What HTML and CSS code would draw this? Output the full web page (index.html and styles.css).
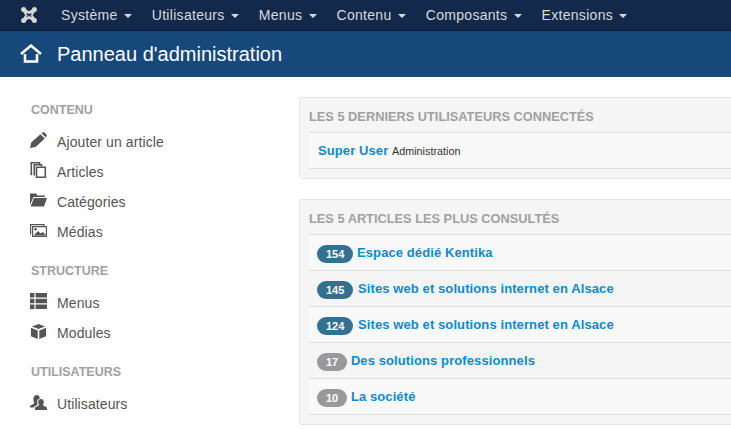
FILE: index.html
```html
<!DOCTYPE html>
<html>

<head>
    <meta charset="UTF-8">
    <title>Panneau d'administration</title>
    <link rel="stylesheet" href="styles.css">
</head>

<body>
    <nav class="navbar">
        <svg class="logo" viewBox="0 0 16 16" width="16" height="16">
            <g fill="#d6d6d2">
                <path d="M3 1 L8 4.2 L13 1 L15 3 L11.8 8 L15 13 L13 15 L8 11.8 L3 15 L1 13 L4.2 8 L1 3 Z" />
                <circle cx="2.6" cy="2.6" r="2.5" />
                <circle cx="13.4" cy="2.6" r="2.5" />
                <circle cx="2.6" cy="13.4" r="2.5" />
                <circle cx="13.4" cy="13.4" r="2.5" />
            </g>
            <path d="M5.7 6.6 L8 8 L10.3 6.6 M5.7 9.4 L8 8 L10.3 9.4" fill="none" stroke="#13294b" stroke-width="1.3" />
        </svg>
        <ul class="menu">
            <li>Système <b class="caret"></b></li>
            <li>Utilisateurs <b class="caret"></b></li>
            <li>Menus <b class="caret"></b></li>
            <li>Contenu <b class="caret"></b></li>
            <li>Composants <b class="caret"></b></li>
            <li>Extensions <b class="caret"></b></li>
        </ul>
    </nav>
    <header class="subhead">
        <svg class="home" viewBox="0 0 22 19" width="22" height="19">
            <path d="M1 10 L11 1.6 L21 10" fill="none" stroke="#fff" stroke-width="2.6" />
            <path d="M5 10 V17.5 H17 V10" fill="none" stroke="#fff" stroke-width="2.6" />
        </svg>
        <h1>Panneau d'administration</h1>
    </header>

    <div class="content">
        <aside class="sidebar">
            <h2>CONTENU</h2>
            <ul>
                <li>
                    <svg viewBox="0 0 17 16" width="17" height="16">
                        <path d="M0 16 L1.2 10.6 L10.4 2.2 L14.8 6.4 L5.6 15 Z M11.6 1.2 L12.8 0.3 Q13.6 -0.2 14.4 0.4 L16.6 2.6 Q17.2 3.4 16.6 4 L15.8 5.4 Z" fill="#555" />
                    </svg>
                    Ajouter un article
                </li>
                <li>
                    <svg viewBox="0 0 16 16" width="16" height="16">
                        <path d="M1.8 12.5 H0.8 V0.8 H9 V2.2 M3.8 13.5 V2.8 H11 V4.4" fill="none" stroke="#555" stroke-width="1.6" />
                        <path d="M6 5.2 H14.8 V15.2 H6 Z" fill="#fff" stroke="#555" stroke-width="1.6" />
                    </svg>
                    Articles
                </li>
                <li>
                    <svg viewBox="0 0 17 14" width="17" height="14">
                        <path d="M0 0.6 H6 L7.5 2.4 H15 V4 H3.4 L0 12 Z M3.9 5 H17 L14 13.5 H0.7 Z" fill="#555" />
                    </svg>
                    Catégories
                </li>
                <li>
                    <svg viewBox="0 0 17 13" width="17" height="13">
                        <path d="M0.6 10.6 V0.6 H14 V2" fill="none" stroke="#555" stroke-width="1.2" />
                        <path d="M2.6 2.6 H16.4 V12.4 H2.6 Z" fill="#fff" stroke="#555" stroke-width="1.2" />
                        <path d="M3.5 11.6 L8 7 L10.6 9.4 L12.6 8 L15.5 10.4 V11.6 Z" fill="#555" />
                        <circle cx="5.6" cy="5.2" r="1.3" fill="#555" />
                    </svg>
                    Médias
                </li>
            </ul>
            <h2>STRUCTURE</h2>
            <ul>
                <li>
                    <svg viewBox="0 0 17 16" width="17" height="16">
                        <path d="M0 0 H4.4 V4.4 H0 Z M5.6 0 H17 V4.4 H5.6 Z M0 5.8 H4.4 V10.2 H0 Z M5.6 5.8 H17 V10.2 H5.6 Z M0 11.6 H4.4 V16 H0 Z M5.6 11.6 H17 V16 H5.6 Z" fill="#555" />
                    </svg>
                    Menus
                </li>
                <li>
                    <svg viewBox="0 0 16 15" width="16" height="15">
                        <path d="M8 0 L14.5 2.4 L8 5 L1.5 2.4 Z M0.4 3.8 L7.2 6.4 V15 L0.4 12.2 Z M15.6 3.8 L8.8 6.4 V15 L15.6 12.2 Z" fill="#555" />
                    </svg>
                    Modules
                </li>
            </ul>
            <h2>UTILISATEURS</h2>
            <ul>
                <li>
                    <svg viewBox="0 0 17 15" width="17" height="15">
                        <path d="M6.5 0 C8.8 0 9.9 1.6 9.7 3.4 C7.8 4 6.9 5.6 7.2 7.6 C7.4 8.6 7.8 9 7.6 9.6 L4.6 11.4 L3.6 12.6 H0 V11.2 C0.3 9.8 4.3 9 4.3 8.2 C4.3 7.4 3.6 6.8 3.4 5.2 C3.1 2.2 4.4 0 6.5 0 Z" fill="#555" />
                        <path d="M11 4 C12.9 4 14 5.4 13.8 7.2 C13.6 8.6 13 9.2 13 10 C13 10.8 16.8 11.6 17 13 V15 H5 V13 C5.2 11.6 9 10.8 9 10 C9 9.2 8.4 8.6 8.2 7.2 C8 5.4 9.1 4 11 4 Z" fill="#555" />
                    </svg>
                    Utilisateurs
                </li>
            </ul>
        </aside>

        <main class="main">
            <section class="panel">
                <h2>LES 5 DERNIERS UTILISATEURS CONNECTÉS</h2>
                <div class="row user-row"><a href="#">Super User</a> <small>Administration</small></div>
            </section>
            <section class="panel">
                <h2>LES 5 ARTICLES LES PLUS CONSULTÉS</h2>
                <div class="row"><span class="badge hot">154</span> <a href="#">Espace dédié Kentika</a></div>
                <div class="row"><span class="badge hot">145</span> <a href="#" class="wide">Sites web et solutions internet en Alsace</a></div>
                <div class="row"><span class="badge hot">124</span> <a href="#" class="wide">Sites web et solutions internet en Alsace</a></div>
                <div class="row"><span class="badge">17</span> <a href="#">Des solutions professionnels</a></div>
                <div class="row"><span class="badge">10</span> <a href="#">La société</a></div>
            </section>
        </main>
    </div>
</body>

</html>
```

FILE: styles.css
```css
* {
    margin: 0;
    padding: 0;
    box-sizing: border-box;
}

html,
body {
    height: 100%;
    overflow: hidden;
}

body {
    font-family: "Liberation Sans", Arial, sans-serif;
    font-size: 14px;
    color: #555;
    background-color: #fff;
}

ul {
    list-style: none;
}

a {
    color: #0b8ad0;
    text-decoration: none;
    font-weight: bold;
    letter-spacing: 0.1px;
}

.navbar {
    display: flex;
    align-items: center;
    height: 31px;
    padding-left: 21px;
    background-color: #13294b;
    border-bottom: 1px solid #0c1a30;
}

.logo {
    flex: none;
}

.menu {
    display: flex;
    gap: 20px;
    margin-left: 24px;
    color: #d9d9d9;
    font-size: 14px;
    letter-spacing: 0.3px;
}

.menu li {
    white-space: nowrap;
}

.caret {
    display: inline-block;
    width: 0;
    height: 0;
    margin-left: 2px;
    vertical-align: middle;
    border-top: 4px solid #d9d9d9;
    border-left: 4px solid transparent;
    border-right: 4px solid transparent;
}

.subhead {
    display: flex;
    align-items: center;
    height: 46px;
    padding-left: 20px;
    background-color: #17487c;
    color: #fff;
}

.home {
    flex: none;
    margin-bottom: 2px;
}

.subhead h1 {
    margin-left: 15px;
    font-size: 20px;
    font-weight: normal;
}

.content {
    display: flex;
    padding-top: 20px;
}

.sidebar {
    flex: none;
    width: 299px;
    padding-left: 30px;
}

.sidebar h2 {
    height: 24px;
    padding-left: 1px;
    font-size: 12.5px;
    line-height: 26px;
    color: #a0a0a0;
}

.sidebar ul {
    margin-top: 6px;
    margin-bottom: 11px;
}

.sidebar li {
    display: flex;
    align-items: center;
    gap: 10px;
    height: 30px;
    font-size: 14px;
    letter-spacing: 0.1px;
}

.sidebar svg {
    flex: none;
    width: 17px;
    margin-bottom: 4px;
}

.main {
    flex: 1;
    min-width: 0;
    overflow: hidden;
}

.panel {
    width: 560px;
    margin-bottom: 20px;
    padding: 0 0 9px 9px;
    background-color: #f5f5f5;
    border: 1px solid #e3e3e3;
    border-radius: 3px;
}

.panel h2 {
    height: 34px;
    font-size: 12.8px;
    line-height: 38px;
    color: #a0a0a0;
}

.row {
    height: 36px;
    padding-left: 8px;
    line-height: 35px;
    font-size: 13px;
    white-space: nowrap;
    border-top: 1px solid #ddd;
}

.row:nth-of-type(odd),
.user-row {
    background-color: #f9f9f9;
}

.row:last-child {
    border-bottom: 1px solid #ddd;
    height: 37px;
}

.user-row {
    padding-left: 9px;
}

.wide {
    margin-left: 1px;
}

small {
    font-size: 10.8px;
    color: #333;
}

.badge {
    display: inline-block;
    min-width: 30px;
    height: 18px;
    padding: 0 9px;
    border-radius: 9px;
    background-color: #999;
    color: #fff;
    font-size: 11px;
    font-weight: bold;
    line-height: 18px;
    text-align: center;
    vertical-align: middle;
}

.badge.hot {
    background-color: #34708f;
}
```
